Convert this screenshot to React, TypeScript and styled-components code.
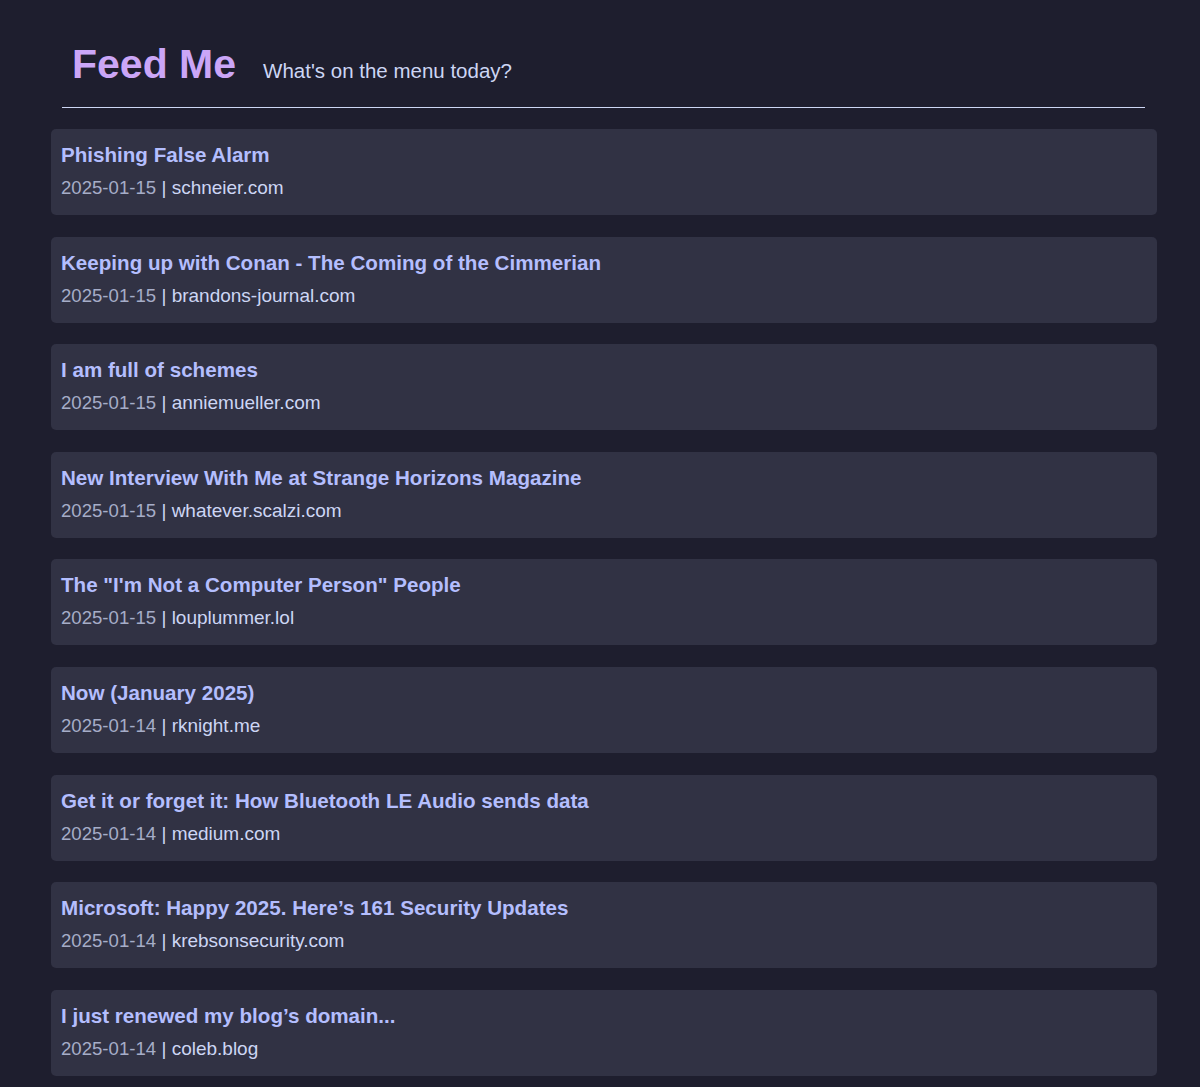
import styled, { createGlobalStyle } from 'styled-components';

const GlobalStyle = createGlobalStyle`
    body {
        margin: 0;
        background: #1e1e2e;
        font-family: 'Liberation Sans', Arial, sans-serif;
    }
`;

const Page = styled.div`
    padding: 40px 43px 11px 51px;
    width: 1106px;
`;

const Header = styled.header`
    display: flex;
    align-items: baseline;
    gap: 27px;
    margin: 0 12px 21px 11px;
    padding: 0 10px 19px 10px;
    border-bottom: 1px solid #cdd6f4;
`;

const Title = styled.h1`
    margin: 0;
    font-size: 41px;
    line-height: 48px;
    font-weight: 700;
    color: #cba6f7;
`;

const Subtitle = styled.span`
    font-size: 20.5px;
    color: #cdd6f4;
`;

const FeedList = styled.ul`
    list-style: none;
    margin: 0;
    padding: 0;
    display: flex;
    flex-direction: column;
    gap: 21.6px;
`;

const Card = styled.li`
    background: #313244;
    border-radius: 5px;
    padding: 12px 10px 14px 10px;
    height: 86px;
    box-sizing: border-box;
`;

const ItemTitle = styled.a`
    display: block;
    font-size: 20.6px;
    line-height: 28px;
    font-weight: 700;
    color: #b4befe;
    text-decoration: none;
`;

const Meta = styled.div`
    margin-top: 6px;
    font-size: 19px;
    line-height: 26px;
    color: #cdd6f4;
`;

const DateText = styled.span`
    color: #a6adc8;
    font-size: 18.6px;
`;

const items = [
    { title: 'Phishing False Alarm', date: '2025-01-15', source: 'schneier.com' },
    { title: 'Keeping up with Conan - The Coming of the Cimmerian', date: '2025-01-15', source: 'brandons-journal.com' },
    { title: 'I am full of schemes', date: '2025-01-15', source: 'anniemueller.com' },
    { title: 'New Interview With Me at Strange Horizons Magazine', date: '2025-01-15', source: 'whatever.scalzi.com' },
    { title: 'The "I\'m Not a Computer Person" People', date: '2025-01-15', source: 'louplummer.lol' },
    { title: 'Now (January 2025)', date: '2025-01-14', source: 'rknight.me' },
    { title: 'Get it or forget it: How Bluetooth LE Audio sends data', date: '2025-01-14', source: 'medium.com' },
    { title: 'Microsoft: Happy 2025. Here\u2019s 161 Security Updates', date: '2025-01-14', source: 'krebsonsecurity.com' },
    { title: 'I just renewed my blog\u2019s domain...', date: '2025-01-14', source: 'coleb.blog' },
];

export default function App() {
    return (
        <>
            <GlobalStyle />
            <Page>
                <Header>
                    <Title>Feed Me</Title>
                    <Subtitle>What's on the menu today?</Subtitle>
                </Header>
                <FeedList>
                    {items.map((item) => (
                        <Card key={item.title}>
                            <ItemTitle href="#">{item.title}</ItemTitle>
                            <Meta>
                                <DateText>{item.date}</DateText> | {item.source}
                            </Meta>
                        </Card>
                    ))}
                </FeedList>
            </Page>
        </>
    );
}
